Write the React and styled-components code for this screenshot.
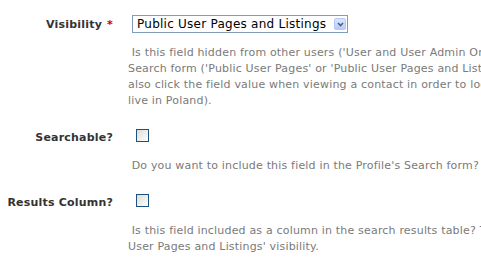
import styled, { createGlobalStyle } from "styled-components";

const GlobalStyle = createGlobalStyle`
  html, body {
    margin: 0;
    padding: 0;
    background: #ffffff;
  }
  body {
    font-family: "DejaVu Sans", Verdana, sans-serif;
    font-size: 11px;
    overflow: hidden;
  }
`;

const Form = styled.div`
  padding-top: 14px;
  width: 481px;
  overflow: hidden;
`;

const Field = styled.div`
  padding-bottom: 18px;
`;

const Row = styled.div`
  display: grid;
  grid-template-columns: 113px 1fr;
  column-gap: 19px;
  align-items: center;
  height: 20px;
`;

const Label = styled.label`
  text-align: right;
  font-weight: bold;
  color: #333333;
  letter-spacing: 0.2px;
  white-space: nowrap;
`;

const Required = styled.span`
  color: #cc0000;
  margin-left: 5px;
`;

const SelectWrap = styled.div`
  position: relative;
  width: 216px;
  height: 18px;
`;

const Select = styled.select`
  appearance: none;
  width: 216px;
  height: 18px;
  margin: 0;
  padding: 0 0 0 4px;
  border: 1px solid #7f9db9;
  border-radius: 0;
  background: #ffffff;
  color: #000000;
  font-family: "DejaVu Sans", Verdana, sans-serif;
  font-size: 12px;
  letter-spacing: 0.25px;
  outline: none;
`;

const Arrow = styled.span`
  position: absolute;
  right: 2px;
  top: 3px;
  width: 12px;
  height: 12px;
  border-radius: 2px;
  background: linear-gradient(#dce6fd, #b8cbf7);
  border: 1px solid #b7c9f2;
  box-sizing: border-box;
  display: flex;
  align-items: center;
  justify-content: center;
  pointer-events: none;
`;

const Check = styled.input`
  appearance: none;
  width: 13px;
  height: 13px;
  margin: 0 0 0 4px;
  border: 1px solid #1c5180;
  background: linear-gradient(135deg, #dcdcd7, #ffffff);
  box-sizing: border-box;
`;

const Help = styled.div`
  margin-top: 11px;
  padding-left: 128px;
  color: #7a7a7a;
  line-height: 16px;
  letter-spacing: 0.18px;
  white-space: pre;
`;

const Chevron = () => (
  <svg width="7" height="5" viewBox="0 0 7 5">
    <path d="M1 1 L3.5 3.5 L6 1" fill="none" stroke="#4d6185" strokeWidth="1.6" />
  </svg>
);

export default function App() {
  return (
    <>
      <GlobalStyle />
      <Form>
        <Field>
          <Row>
            <Label>
              Visibility<Required>*</Required>
            </Label>
            <SelectWrap>
              <Select defaultValue="public-listings">
                <option value="admin">User and User Admin Only</option>
                <option value="public">Public User Pages</option>
                <option value="public-listings">Public User Pages and Listings</option>
              </Select>
              <Arrow>
                <Chevron />
              </Arrow>
            </SelectWrap>
          </Row>
          <Help>
            {" Is this field hidden from other users ('User and User Admin Only'), or is it\n"}
            {"Search form ('Public User Pages' or 'Public User Pages and Listings')?\n"}
            {"also click the field value when viewing a contact in order to locate other\n"}
            {"live in Poland)."}
          </Help>
        </Field>
        <Field>
          <Row>
            <Label>Searchable?</Label>
            <div>
              <Check type="checkbox" />
            </div>
          </Row>
          <Help>{" Do you want to include this field in the Profile's Search form?"}</Help>
        </Field>
        <Field>
          <Row>
            <Label>Results Column?</Label>
            <div>
              <Check type="checkbox" />
            </div>
          </Row>
          <Help>
            {" Is this field included as a column in the search results table? This\n"}
            {"User Pages and Listings' visibility."}
          </Help>
        </Field>
      </Form>
    </>
  );
}
